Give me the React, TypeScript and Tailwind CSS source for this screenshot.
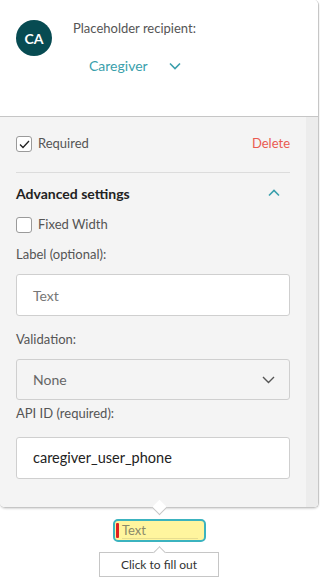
import React from "react";

const font = { fontFamily: "Lato, 'Open Sans', Arial, sans-serif" };

function Check({ checked }: { checked?: boolean }) {
  return (
    <div className="w-[16px] h-[16px] rounded-[3px] border border-[#9a9a9a] bg-white flex items-center justify-center">
      {checked && (
        <svg width="11" height="9" viewBox="0 0 11 9" fill="none">
          <path d="M1 4.5 L4 7.5 L10 1" stroke="#222" strokeWidth="1.3" />
        </svg>
      )}
    </div>
  );
}

export default function App() {
  return (
    <div className="w-[320px] h-[584px] bg-white relative overflow-hidden" style={font}>
      <div className="w-[319px] border-r border-b border-[#c6c6c6] rounded-tr-[5px] rounded-b-[5px] overflow-hidden shadow-[0_1px_2px_rgba(0,0,0,0.15)]">
        {/* top */}
        <div className="h-[117px] bg-white border-b border-[#c6c6c6] flex pl-[16px] pt-[20px]">
          <div className="w-[36px] h-[36px] rounded-full bg-[#074b52] text-white font-bold text-[14px] flex items-center justify-center">
            CA
          </div>
          <div className="ml-[21px] flex flex-col">
            <div className="text-[13px] text-[#555] leading-[16px]">Placeholder recipient:</div>
            <div className="flex items-center ml-[16px] mt-[21px]">
              <span className="text-[14px] text-[#3a9fac] leading-[18px]">Caregiver</span>
              <svg className="ml-[21px]" width="12" height="8" viewBox="0 0 12 8" fill="none">
                <path d="M1 1.5 L6 6.5 L11 1.5" stroke="#3a9fac" strokeWidth="1.6" />
              </svg>
            </div>
          </div>
        </div>
        {/* gray */}
        <div className="flex h-[390px]">
          <div className="w-[306px] bg-[#f4f4f4] pl-[16px] pr-[16px] flex flex-col">
            <div className="flex items-center mt-[19px] h-[16px]">
              <Check checked />
              <span className="ml-[6px] text-[13px] text-[#555]">Required</span>
              <span className="ml-auto text-[13px] text-[#ea5a50]">Delete</span>
            </div>
            <div className="mt-[20px] h-px bg-[#dcdcdc]" />
            <div className="flex items-center mt-[11px] h-[18px]">
              <span className="text-[14px] font-bold text-[#222]">Advanced settings</span>
              <svg className="ml-auto mr-[10px]" width="12" height="8" viewBox="0 0 12 8" fill="none">
                <path d="M1 6.5 L6 1.5 L11 6.5" stroke="#3a9fac" strokeWidth="1.6" />
              </svg>
            </div>
            <div className="flex items-center mt-[15px] h-[16px]">
              <Check />
              <span className="ml-[6px] text-[13px] text-[#555]">Fixed Width</span>
            </div>
            <div className="mt-[13px] text-[13px] text-[#555] leading-[16px]">Label (optional):</div>
            <div className="mt-[12px] h-[42px] bg-white border border-[#cfcfcf] rounded-[3px] flex items-center pl-[16px] text-[14px] text-[#777]">
              Text
            </div>
            <div className="mt-[15px] text-[13px] text-[#555] leading-[16px]">Validation:</div>
            <div className="mt-[12px] h-[41px] bg-[#f4f4f4] border border-[#cfcfcf] rounded-[3px] flex items-center pl-[16px] pr-[14px] text-[14px] text-[#666]">
              None
              <svg className="ml-auto" width="13" height="8" viewBox="0 0 13 8" fill="none">
                <path d="M1 1 L6.5 6.5 L12 1" stroke="#555" strokeWidth="1.4" />
              </svg>
            </div>
            <div className="mt-[5px] text-[13px] text-[#555] leading-[16px]">API ID (required):</div>
            <div className="mt-[16px] h-[42px] bg-white border border-[#cfcfcf] rounded-[3px] flex items-center pl-[16px] text-[14.5px] text-[#222]">
              caregiver_user_phone
            </div>
          </div>
          <div className="w-[12px] bg-[#ececec]" />
        </div>
      </div>
      {/* arrow down from panel */}
      <div className="absolute left-[154px] top-[502px] w-[11px] h-[11px] rotate-45 bg-white border-r border-b border-[#c6c6c6]" />

      {/* field */}
      <div className="absolute left-[113px] top-[519px] w-[93px] h-[23px] rounded-[5px] border-2 border-[#3bb3bf] bg-[#fff59e] flex items-center overflow-hidden">
        <div className="ml-[1px] w-[3px] h-[15px] bg-[#e02020] rounded-[1px]" />
        <div className="ml-[3px] flex-1 mr-[6px] border-b border-[#e7dd90] text-[13px] text-[#8a8a6a] leading-[15px]">Text</div>
      </div>

      {/* tooltip */}
      <div className="absolute left-[99px] top-[552px] w-[120px] h-[25px] bg-white border border-[#c6c6c6] flex items-center justify-center text-[12px] text-[#333]">
        Click to fill out
      </div>
      <div className="absolute left-[155px] top-[548px] w-[9px] h-[9px] rotate-45 bg-white border-l border-t border-[#c6c6c6]" />
    </div>
  );
}
